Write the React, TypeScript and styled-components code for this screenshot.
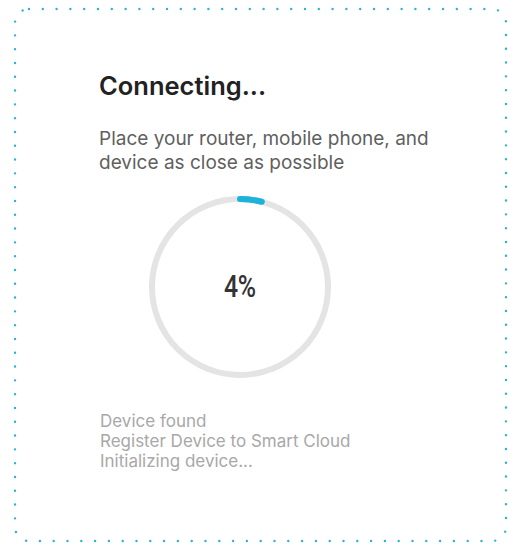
import React from "react";
import styled, { createGlobalStyle } from "styled-components";

const GlobalStyle = createGlobalStyle`
  html, body {
    margin: 0;
    padding: 0;
    background: #ffffff;
  }
  body {
    font-family: Inter, "Liberation Sans", Arial, sans-serif;
  }
`;

const Page = styled.div`
  width: 516px;
  height: 550px;
  padding: 9px 10px 9px 15px;
  box-sizing: border-box;
`;

const Card = styled.div`
  position: relative;
  width: 491px;
  height: 532px;
  box-sizing: border-box;
  padding: 62px 30px 0 84px;
  display: flex;
  flex-direction: column;
  align-items: flex-start;
`;

const Frame = styled.svg`
  position: absolute;
  inset: 0;
  width: 100%;
  height: 100%;
  overflow: visible;
  pointer-events: none;
`;

const Title = styled.h1`
  margin: 0;
  font-family: Inter, "Liberation Sans", Arial, sans-serif;
  font-size: 25.5px;
  line-height: 30px;
  font-weight: 600;
  color: #222222;
`;

const Subtitle = styled.p`
  margin: 26px 0 0 0;
  font-size: 19px;
  line-height: 24px;
  color: #5f5f5f;
  width: 360px;
`;

const RingWrap = styled.div`
  position: relative;
  margin: 17px 0 0 46px;
  width: 190px;
  height: 190px;
  display: flex;
  align-items: center;
  justify-content: center;
`;

const RingSvg = styled.svg`
  position: absolute;
  inset: 0;
`;

const Percent = styled.span`
  position: relative;
  display: inline-block;
  top: -1px;
  font-family: Roboto, "DejaVu Sans Condensed", sans-serif;
  font-size: 31px;
  line-height: 31px;
  font-weight: 500;
  color: #333333;
  letter-spacing: -0.5px;
  transform: scaleX(0.8);
`;

const StatusList = styled.ul`
  list-style: none;
  margin: 29px 0 0 1px;
  padding: 0;
`;

const StatusItem = styled.li`
  font-size: 17px;
  line-height: 20px;
  color: #a8a8a8;
`;

const progress = 4;

export default function App() {
  const r = 88;
  const c = 2 * Math.PI * r;
  const arc = (progress / 100) * c;
  return (
    <>
      <GlobalStyle />
      <Page>
        <Card>
          <Frame>
            <rect
              x="0"
              y="0"
              width="491"
              height="532"
              rx="14"
              ry="14"
              fill="none"
              stroke="#2bb3d4"
              strokeWidth="2.4"
              strokeLinecap="round"
              strokeDasharray="0 13.8"
            />
          </Frame>
          <Title>Connecting...</Title>
          <Subtitle>
            Place your router, mobile phone, and device as close as possible
          </Subtitle>
          <RingWrap>
            <RingSvg width="190" height="190" viewBox="0 0 190 190">
              <circle cx="95" cy="95" r={r} fill="none" stroke="#e4e4e4" strokeWidth="6" />
              <circle
                cx="95"
                cy="95"
                r={r}
                fill="none"
                stroke="#1cb2dc"
                strokeWidth="6"
                strokeLinecap="round"
                strokeDasharray={`${arc} ${c}`}
                transform="rotate(-90 95 95)"
              />
            </RingSvg>
            <Percent>{progress}%</Percent>
          </RingWrap>
          <StatusList>
            <StatusItem>Device found</StatusItem>
            <StatusItem>Register Device to Smart Cloud</StatusItem>
            <StatusItem>Initializing device...</StatusItem>
          </StatusList>
        </Card>
      </Page>
    </>
  );
}
